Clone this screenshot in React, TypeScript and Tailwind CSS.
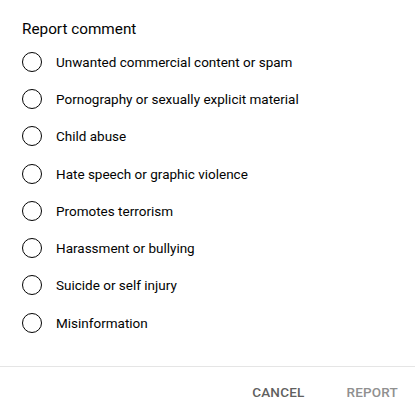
const REASONS = [
  'Unwanted commercial content or spam',
  'Pornography or sexually explicit material',
  'Child abuse',
  'Hate speech or graphic violence',
  'Promotes terrorism',
  'Harassment or bullying',
  'Suicide or self injury',
  'Misinformation',
];

export default function App() {
  return (
    <div className="w-[415px] h-[417px] bg-white flex flex-col font-['Roboto',_'Liberation_Sans',_sans-serif] text-[#030303]">
      <div className="flex-1 px-[22px] pt-[17px]">
        <h2 className="text-[15.3px] leading-6 font-normal">Report comment</h2>
        <div className="mt-[2px] flex flex-col">
          {REASONS.map((reason) => (
            <label key={reason} className="h-[37.3px] flex items-center cursor-pointer">
              <span className="w-5 h-5 rounded-full border-[1.5px] border-[#030303] shrink-0" />
              <span className="ml-[14px] text-[13.5px] leading-5">{reason}</span>
            </label>
          ))}
        </div>
      </div>

      <div className="h-[51px] border-t border-[#e5e5e5] flex items-center justify-end pr-[17px] gap-[42px]">
        <button className="text-[13.5px] font-medium uppercase tracking-[0.2px] text-[#606060]">Cancel</button>
        <button disabled className="text-[13.5px] font-medium uppercase tracking-[0.2px] text-[#909090]">Report</button>
      </div>
    </div>
  );
}
